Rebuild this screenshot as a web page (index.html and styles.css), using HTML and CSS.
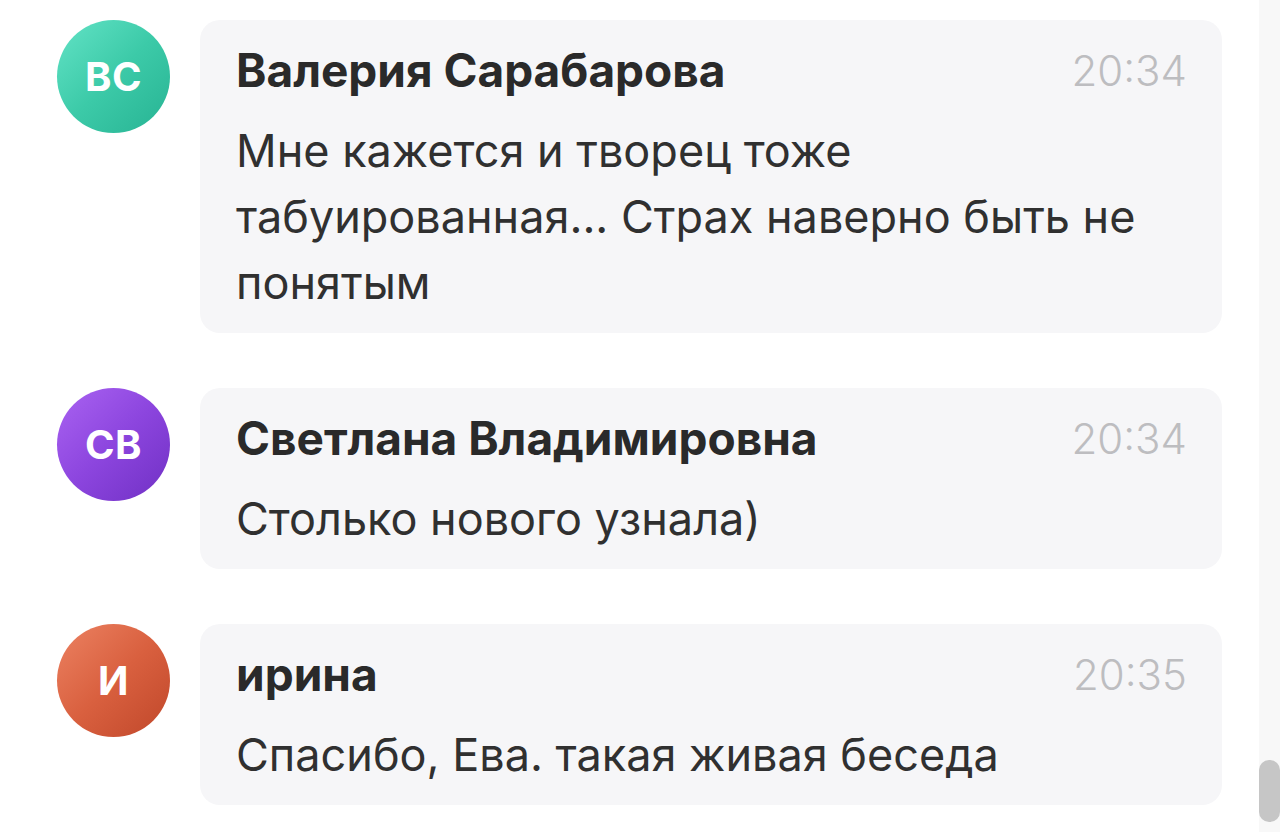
FILE: index.html
```html
<!DOCTYPE html>
<html lang="ru">
<head>
<meta charset="utf-8">
<title>Чат</title>
<link rel="stylesheet" href="styles.css">
</head>
<body>
<div class="page">
  <main class="feed">
    <div class="msg">
      <div class="avatar av-teal">ВС</div>
      <div class="card">
        <div class="head">
          <span class="name">Валерия Сарабарова</span>
          <span class="time">20:34</span>
        </div>
        <p class="text">Мне кажется и творец тоже<br>табуированная... Страх наверно быть не<br>понятым</p>
      </div>
    </div>
    <div class="msg">
      <div class="avatar av-purple">СВ</div>
      <div class="card">
        <div class="head">
          <span class="name">Светлана Владимировна</span>
          <span class="time">20:34</span>
        </div>
        <p class="text">Столько нового узнала)</p>
      </div>
    </div>
    <div class="msg">
      <div class="avatar av-orange">И</div>
      <div class="card">
        <div class="head">
          <span class="name">ирина</span>
          <span class="time">20:35</span>
        </div>
        <p class="text">Спасибо, Ева. такая живая беседа</p>
      </div>
    </div>
  </main>
  <div class="scrollbar"><div class="thumb"></div></div>
</div>
</body>
</html>
```

FILE: styles.css
```css
html, body {
  margin: 0;
  padding: 0;
  background: #ffffff;
}
body {
  font-family: "Inter", "Noto Sans", sans-serif;
  color: #2b2b2b;
}
.page {
  display: flex;
  width: 1280px;
  height: 832px;
  overflow: hidden;
}
.feed {
  flex: 1;
  display: flex;
  flex-direction: column;
  gap: 55px;
  padding: 20px 37px 0 57px;
}
.msg {
  display: flex;
  align-items: flex-start;
  gap: 30px;
}
.avatar {
  flex: 0 0 113px;
  width: 113px;
  height: 113px;
  border-radius: 50%;
  display: flex;
  align-items: center;
  justify-content: center;
  color: #ffffff;
  font-weight: 700;
  font-size: 40px;
  letter-spacing: 0.5px;
}
.av-teal { background: linear-gradient(135deg, #63e3c6 0%, #3ccaa8 50%, #27b393 100%); }
.av-purple { background: linear-gradient(135deg, #aa63f2 0%, #8c45de 50%, #7030c4 100%); }
.av-orange { background: linear-gradient(135deg, #ec8262 0%, #d9603f 50%, #c0472a 100%); }
.card {
  flex: 1;
  background: #f6f6f8;
  border-radius: 20px;
  padding: 28px 35px 17px 36px;
}
.head {
  display: flex;
  justify-content: space-between;
  align-items: center;
  height: 44px;
}
.name {
  font-weight: 700;
  font-size: 46px;
  color: #2a2a2a;
}
.time {
  font-size: 42px;
  font-weight: 300;
  color: #bdbdc0;
}
.text {
  margin: 26px 0 0 0;
  font-size: 45px;
  line-height: 66px;
  color: #303030;
}
.scrollbar {
  flex: 0 0 21px;
  background: #f8f8f8;
  display: flex;
  flex-direction: column;
  justify-content: flex-end;
  padding-bottom: 10px;
  box-sizing: border-box;
}
.thumb {
  height: 62px;
  background: #c6c6c6;
  border-radius: 10px;
}
```
